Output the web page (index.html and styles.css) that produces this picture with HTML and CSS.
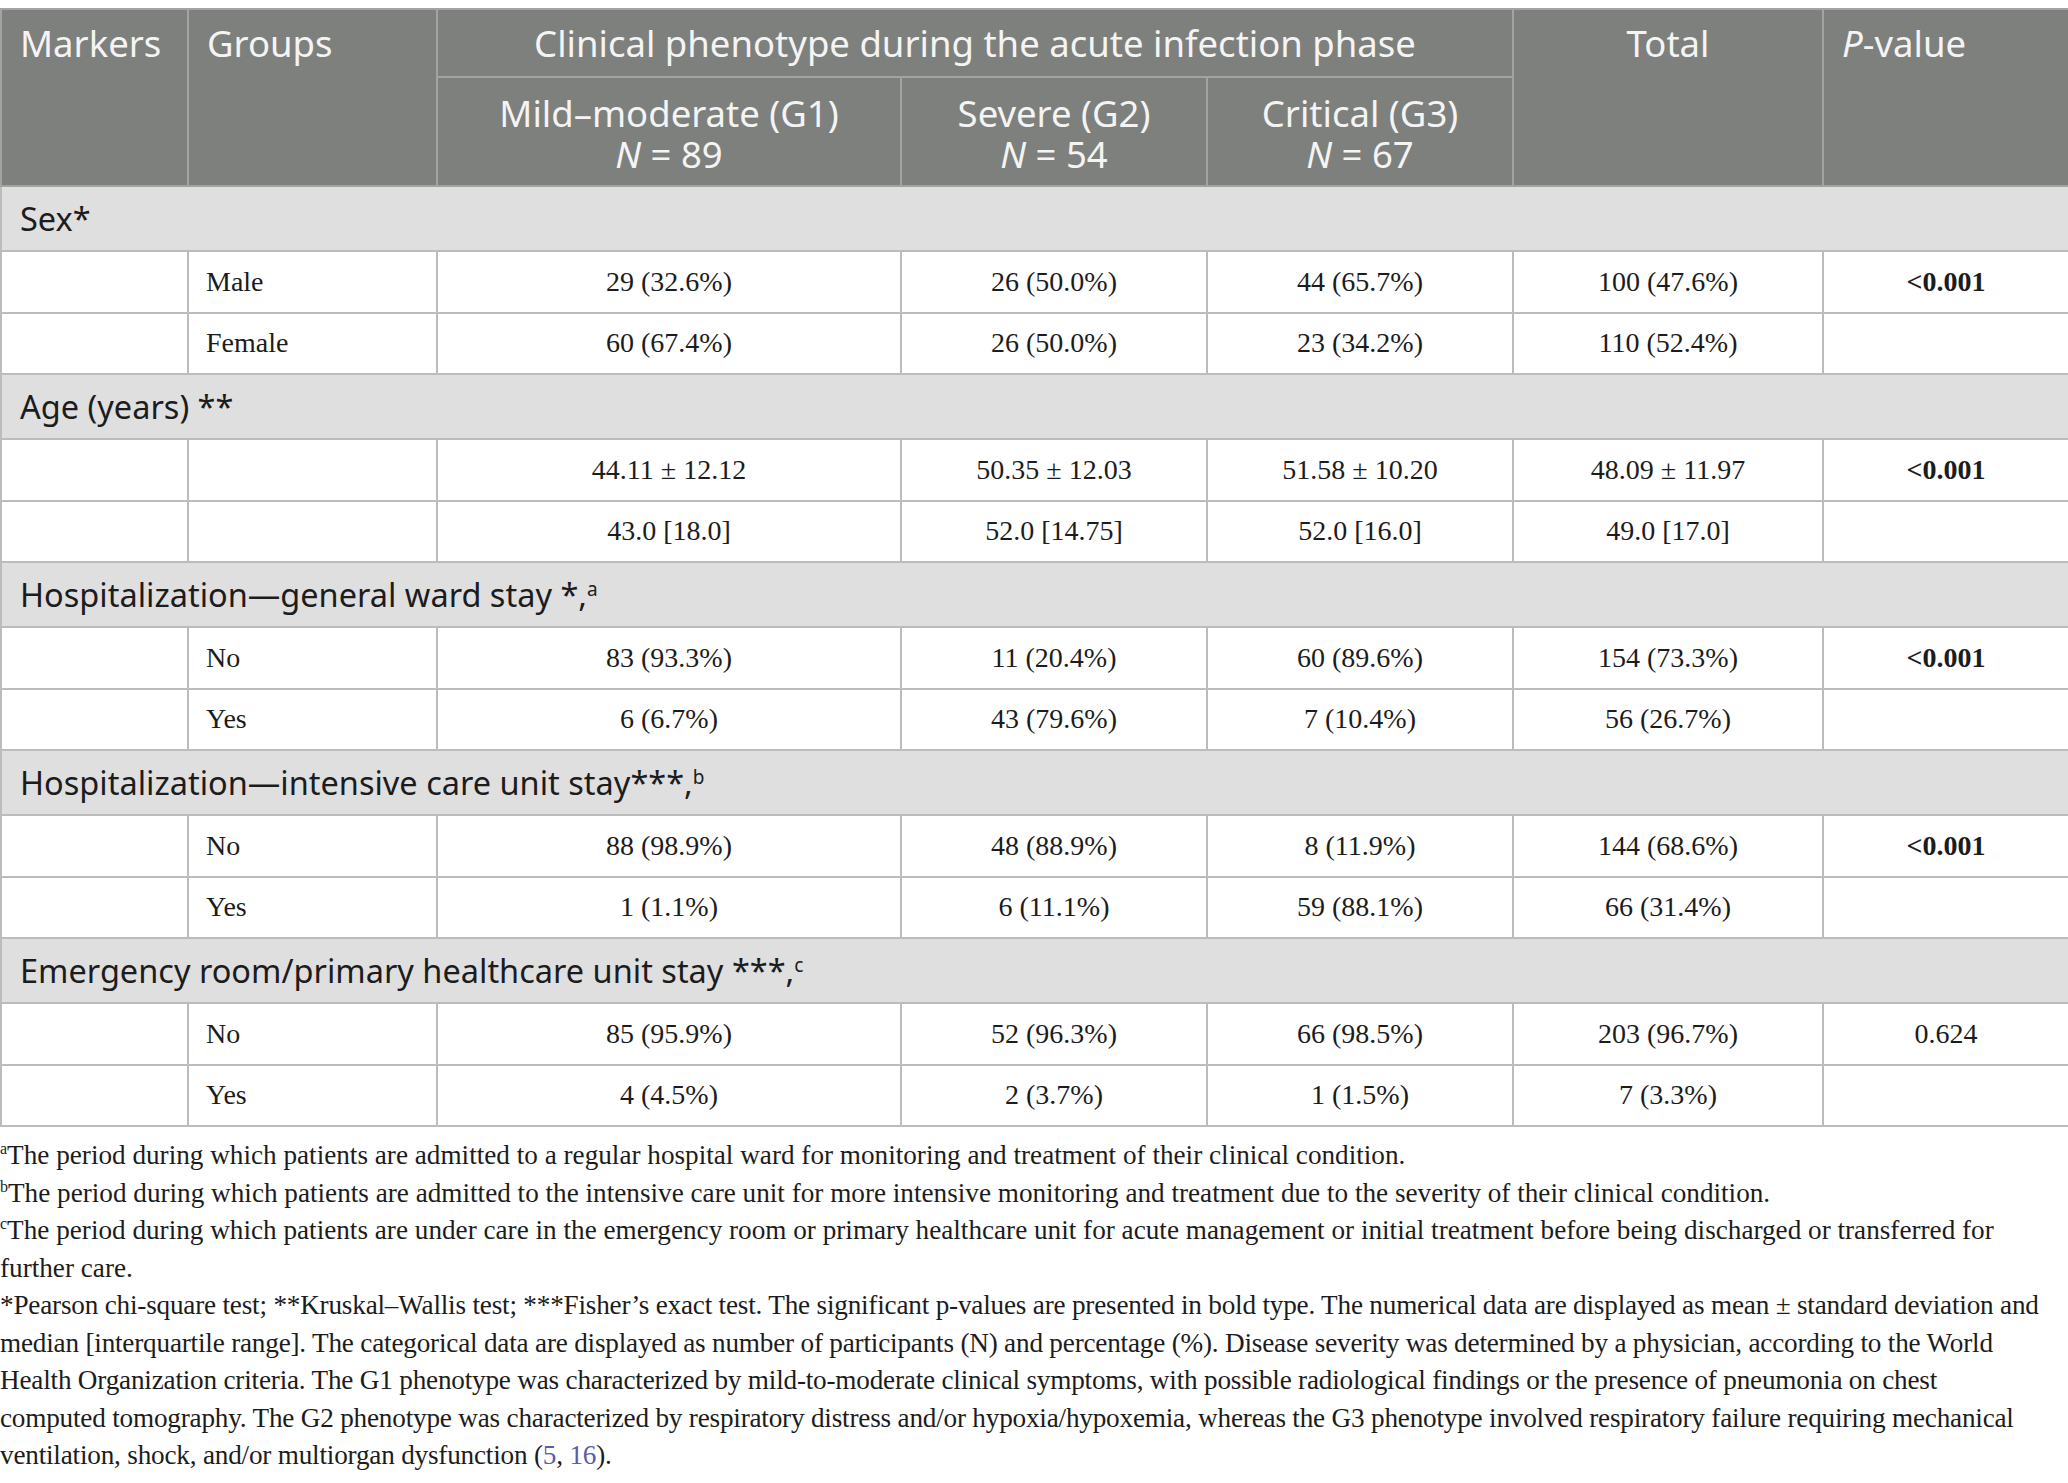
FILE: index.html
```html
<!DOCTYPE html>
<html>
<head>
<meta charset="utf-8">
<link rel="stylesheet" href="styles.css">
</head>
<body>
<div class="wrap">
<table class="tbl">
  <colgroup>
    <col class="c-mark"><col class="c-grp"><col class="c-g1"><col class="c-g2"><col class="c-g3"><col class="c-tot"><col class="c-p">
  </colgroup>
  <thead>
    <tr class="h1">
      <th rowspan="2" class="left top">Markers</th>
      <th rowspan="2" class="left top">Groups</th>
      <th colspan="3">Clinical phenotype during the acute infection phase</th>
      <th rowspan="2" class="top">Total</th>
      <th rowspan="2" class="left top"><i>P</i>-value</th>
    </tr>
    <tr class="h2">
      <th>Mild–moderate (G1)<br><i>N</i> = 89</th>
      <th>Severe (G2)<br><i>N</i> = 54</th>
      <th>Critical (G3)<br><i>N</i> = 67</th>
    </tr>
  </thead>
  <tbody>
    <tr class="grp"><td colspan="7">Sex*</td></tr>
    <tr><td></td><td class="left">Male</td><td>29 (32.6%)</td><td>26 (50.0%)</td><td>44 (65.7%)</td><td>100 (47.6%)</td><td><b>&lt;0.001</b></td></tr>
    <tr><td></td><td class="left">Female</td><td>60 (67.4%)</td><td>26 (50.0%)</td><td>23 (34.2%)</td><td>110 (52.4%)</td><td></td></tr>
    <tr class="grp"><td colspan="7">Age (years) **</td></tr>
    <tr><td></td><td></td><td>44.11 ± 12.12</td><td>50.35 ± 12.03</td><td>51.58 ± 10.20</td><td>48.09 ± 11.97</td><td><b>&lt;0.001</b></td></tr>
    <tr><td></td><td></td><td>43.0 [18.0]</td><td>52.0 [14.75]</td><td>52.0 [16.0]</td><td>49.0 [17.0]</td><td></td></tr>
    <tr class="grp"><td colspan="7">Hospitalization—general ward stay *,<sup>a</sup></td></tr>
    <tr><td></td><td class="left">No</td><td>83 (93.3%)</td><td>11 (20.4%)</td><td>60 (89.6%)</td><td>154 (73.3%)</td><td><b>&lt;0.001</b></td></tr>
    <tr><td></td><td class="left">Yes</td><td>6 (6.7%)</td><td>43 (79.6%)</td><td>7 (10.4%)</td><td>56 (26.7%)</td><td></td></tr>
    <tr class="grp"><td colspan="7">Hospitalization—intensive care unit stay***,<sup>b</sup></td></tr>
    <tr><td></td><td class="left">No</td><td>88 (98.9%)</td><td>48 (88.9%)</td><td>8 (11.9%)</td><td>144 (68.6%)</td><td><b>&lt;0.001</b></td></tr>
    <tr><td></td><td class="left">Yes</td><td>1 (1.1%)</td><td>6 (11.1%)</td><td>59 (88.1%)</td><td>66 (31.4%)</td><td></td></tr>
    <tr class="grp"><td colspan="7">Emergency room/primary healthcare unit stay ***,<sup>c</sup></td></tr>
    <tr><td></td><td class="left">No</td><td>85 (95.9%)</td><td>52 (96.3%)</td><td>66 (98.5%)</td><td>203 (96.7%)</td><td>0.624</td></tr>
    <tr><td></td><td class="left">Yes</td><td>4 (4.5%)</td><td>2 (3.7%)</td><td>1 (1.5%)</td><td>7 (3.3%)</td><td></td></tr>
  </tbody>
</table>
<div class="notes">
  <p><sup>a</sup>The period during which patients are admitted to a regular hospital ward for monitoring and treatment of their clinical condition.</p>
  <p><sup>b</sup>The period during which patients are admitted to the intensive care unit for more intensive monitoring and treatment due to the severity of their clinical condition.</p>
  <p><sup>c</sup>The period during which patients are under care in the emergency room or primary healthcare unit for acute management or initial treatment before being discharged or transferred for further care.</p>
  <p class="stats">*Pearson chi-square test; **Kruskal–Wallis test; ***Fisher’s exact test. The significant p-values are presented in bold type. The numerical data are displayed as mean ± standard deviation and median [interquartile range]. The categorical data are displayed as number of participants (N) and percentage (%). Disease severity was determined by a physician, according to the World Health Organization criteria. The G1 phenotype was characterized by mild-to-moderate clinical symptoms, with possible radiological findings or the presence of pneumonia on chest computed tomography. The G2 phenotype was characterized by respiratory distress and/or hypoxia/hypoxemia, whereas the G3 phenotype involved respiratory failure requiring mechanical ventilation, shock, and/or multiorgan dysfunction (<a class="ref">5</a>, <a class="ref">16</a>).</p>
</div>
</div>
</body>
</html>
```

FILE: styles.css
```css
html, body {
  margin: 0;
  padding: 0;
  background: #ffffff;
}
body {
  padding-top: 8px;
}
.wrap {
  width: 2068px;
}
.tbl {
  width: 2068px;
  table-layout: fixed;
  border-collapse: collapse;
  font-family: "Liberation Serif", "Times New Roman", serif;
  font-size: 28px;
  color: #1c1c1c;
}
.c-mark { width: 187px; }
.c-grp { width: 249px; }
.c-g1 { width: 464px; }
.c-g2 { width: 306px; }
.c-g3 { width: 306px; }
.c-tot { width: 310px; }
.c-p { width: 246px; }

.tbl th {
  background: #7e807e;
  color: #f4f4f4;
  font-family: "Noto Sans", "Open Sans", sans-serif;
  font-weight: 400;
  font-size: 36.5px;
  line-height: 41px;
  border: 2px solid #a2a3a2;
  text-align: center;
  vertical-align: middle;
  padding: 0 18px;
}
.tbl th.left { text-align: left; }
.tbl th.top { vertical-align: top; padding-top: 13px; }
.tbl tr.h1 { height: 68px; }
.tbl tr.h2 { height: 109px; }
.tbl tr.h2 th { padding-top: 4px; }

.tbl td {
  border: 2px solid #bcbcbc;
  height: 59.5px;
  padding: 0 17px;
  text-align: center;
  vertical-align: middle;
  line-height: 32px;
}
.tbl td.left { text-align: left; }
.tbl tr.grp td {
  background: #e0dfe0;
  height: 63px;
  padding: 0 18px;
  text-align: left;
  font-family: "Noto Sans", "Open Sans", sans-serif;
  font-size: 32.5px;
  color: #1c1c1c;
}
.tbl tr.grp sup {
  font-size: 19px;
  vertical-align: 11px;
  line-height: 0;
}
.tbl b { font-weight: 700; }

.notes {
  margin-top: 10px;
  font-family: "Liberation Serif", "Times New Roman", serif;
  font-size: 27.2px;
  line-height: 37.5px;
  color: #1c1c1c;
  width: 2044px;
}
.notes p { margin: 0; }
.notes p.stats { letter-spacing: -0.2px; }
.notes sup {
  font-size: 16px;
  vertical-align: 10px;
  line-height: 0;
}
.ref { color: #5b5ba8; text-decoration: none; }
```
